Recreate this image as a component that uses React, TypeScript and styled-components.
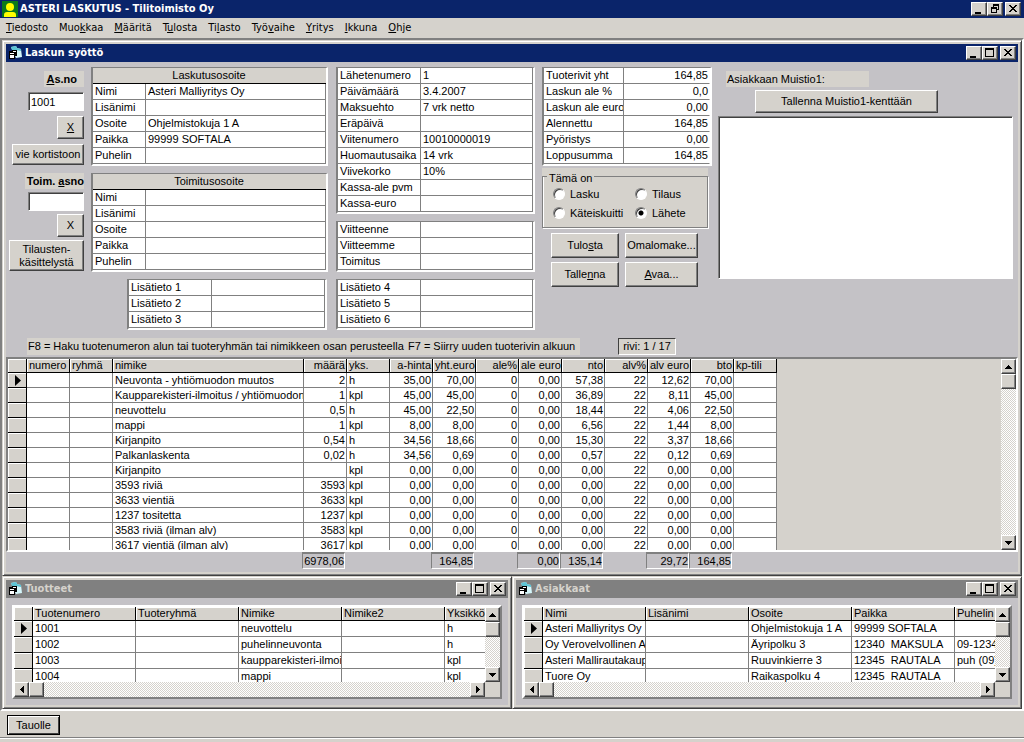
import React from "react";
import styled, { createGlobalStyle, css } from "styled-components";

const face = "#d5d2cc";
const canvas = "#c4c2c6";
const navy = "#0a246a";
const grey = "#808080";
const dark = "#404040";

const uiFont = `"Liberation Sans", Arial, sans-serif`;
const chromeFont = `"DejaVu Sans Condensed", "DejaVu Sans", Tahoma, sans-serif`;

const Global = createGlobalStyle`
  *, *::before, *::after { box-sizing: border-box; }
  body { margin: 0; background: ${face}; }
  body, button, input, textarea { font: 11px/13px ${uiFont}; color: #000; }
  button { margin: 0; padding: 0; }
`;

const raised = css`
  border: 1px solid;
  border-color: #fff ${dark} ${dark} #fff;
  box-shadow: inset -1px -1px 0 ${grey};
  background: ${face};
`;
const sunken = css`
  border: 1px solid;
  border-color: ${grey} #fff #fff ${grey};
  box-shadow: inset 1px 1px 0 ${dark};
  background: #fff;
`;

/* ---------- shell ---------- */

const Page = styled.div`
  min-height: 100vh;
  display: flex;
  flex-direction: column;
`;

const TitleBar = styled.header<{ $bg: string; $fg?: string; $pad: string }>`
  height: 18px;
  display: flex;
  align-items: center;
  gap: 2px;
  padding: ${(p) => p.$pad};
  background: ${(p) => p.$bg};
  color: ${(p) => p.$fg || "#fff"};
  font: bold 11px/18px ${chromeFont};
`;

const Caption = styled.h1`
  flex: 1;
  margin: 0;
  font: inherit;
  white-space: nowrap;
  overflow: hidden;
`;

const CaptionButtons = styled.div`
  display: flex;
  button:last-child { margin-left: 2px; }
`;

const CaptionButton = styled.button`
  ${raised}
  width: 16px;
  height: 14px;
  display: grid;
  place-items: center;
  svg { display: block; }
`;

const MenuBar = styled.nav`
  height: 20px;
  display: flex;
  align-items: center;
`;

const MenuItem = styled.button`
  border: 0;
  background: none;
  padding: 0 5px 0 6px;
  font: 11px/18px ${chromeFont};
`;

const Client = styled.main`
  flex: 1;
  display: flex;
  flex-direction: column;
  border: solid;
  border-width: 2px;
  border-color: ${grey} #fff #fff ${grey};
  background: ${grey};
`;

const Pair = styled.div`
  flex: 1;
  display: grid;
  grid-template-columns: 1fr 1fr;
`;

const Frame = styled.section`
  min-width: 0;
  padding: 3px;
  border: 1px solid;
  border-color: ${face} ${dark} ${dark} ${face};
  box-shadow: inset 1px 1px 0 #fff, inset -1px -1px 0 ${grey};
  background: ${face};
`;

const FormBody = styled.div`
  background: ${canvas};
  padding-bottom: 3px;
`;

const StatusBar = styled.footer`
  height: 27px;
  margin-bottom: 4px;
  padding: 4px 7px;
  border-bottom: 1px solid ${grey};
  box-shadow: 0 1px 0 #fff;
`;

/* ---------- controls ---------- */

const PushButton = styled.button<{ $w?: number; $h: number; $strong?: boolean }>`
  ${raised}
  display: block;
  width: ${(p) => (p.$w ? p.$w + "px" : "auto")};
  height: ${(p) => p.$h}px;
  ${(p) => p.$strong && css`border-color: #000;
    box-shadow: inset 1px 1px 0 #fff, inset -1px -1px 0 ${dark};`}
`;

const TextBox = styled.input`
  ${sunken}
  width: 56px;
  height: 19px;
  padding: 0 2px;
  border-radius: 0;
  outline: none;
`;

const Tag = styled.label`
  background: ${face};
  line-height: 16px;
  padding: 0 1px;
`;

const BoldTag = styled(Tag)<{ $inset?: boolean }>`
  font-weight: bold;
  white-space: nowrap;
  padding: 0 ${(p) => (p.$inset ? "7px" : "0")} 0 2px;
`;

/* ---------- form ---------- */

const Form = styled.div`
  display: grid;
  grid-template-columns: 78px 238px 199px 169px 1fr;
  column-gap: 7px;
  padding: 5px 5px 0 0;
`;

const Column = styled.div`
  display: flex;
  flex-direction: column;
  gap: 7px;
`;

const CustomerColumn = styled.div`
  display: grid;
  grid-template-rows: 106px auto;
  align-items: start;
`;

const Stack = styled.div<{ $gap: number; $top?: number }>`
  display: flex;
  flex-direction: column;
  align-items: flex-end;
  gap: ${(p) => p.$gap}px;
  padding-top: ${(p) => p.$top || 0}px;
`;

const FieldTable = styled.table<{ $w: number; $label: number; $indent?: boolean }>`
  width: ${(p) => p.$w}px;
  margin-left: ${(p) => (p.$indent ? "36px" : "0")};
  table-layout: fixed;
  border-collapse: separate;
  border-spacing: 0;
  border: solid;
  border-width: 1px 2px 2px 2px;
  border-color: ${grey} #fff #fff ${grey};
  background: #fff;
  col:first-child { width: ${(p) => p.$label}px; }
  th, td {
    height: 16px;
    padding: 0 3px 0 2px;
    line-height: 15px;
    font-weight: normal;
    text-align: left;
    white-space: nowrap;
    overflow: hidden;
    border-bottom: 1px solid ${grey};
  }
  tbody th { border-right: 1px solid ${grey}; padding-right: 0; }
  thead th {
    text-align: center;
    background: ${face};
    border-bottom-color: #000;
  }
`;

const Value = styled.td<{ $right?: boolean }>`
  && {
    text-align: ${(p) => (p.$right ? "right" : "left")};
    padding-right: ${(p) => (p.$right ? "1px" : "3px")};
  }
  border-right: 1px solid ${(p) => (p.$right ? "transparent" : grey)};
`;

const GroupPanel = styled.div`
  background: ${face};
  margin-top: -5px;
  width: 166px;
`;

const Group = styled.fieldset`
  margin: 0;
  height: 60px;
  padding: 2px 0 0 10px;
  border: 1px solid ${grey};
  box-shadow: 1px 1px 0 #fff, inset 1px 0 0 #fff;
  display: grid;
  grid-template-columns: 82px 1fr;
  row-gap: 5px;
  align-content: start;
  legend { padding: 4px 2px 0; margin-left: -6px; line-height: 13px; }
  label { display: flex; align-items: center; gap: 5px; height: 14px; }
`;

const Radio = styled.input`
  appearance: none;
  width: 12px;
  height: 12px;
  margin: 0;
  border-radius: 50%;
  border: 1px solid;
  border-color: ${grey} #fff #fff ${grey};
  box-shadow: inset 1px 1px 0 ${dark};
  background: #fff;
  &:checked { background: radial-gradient(circle at 5px 5px, #000 2px, #fff 3px); }
`;

const ActionGrid = styled.div`
  display: grid;
  grid-template-columns: 68px 73px;
  gap: 4px 6px;
  padding-left: 9px;
  margin-top: -2px;
`;

const NoteColumn = styled.div`
  display: flex;
  flex-direction: column;
  align-items: flex-start;
  padding-top: 4px;
  gap: 3px;
`;

const NoteLabel = styled(Tag)`
  width: 143px;
  margin-left: 8px;
`;

const NoteButton = styled(PushButton)`
  margin-left: 37px;
`;

const Notes = styled.textarea`
  ${sunken}
  width: 100%;
  height: 163px;
  resize: none;
  outline: none;
`;

const HintRow = styled.div`
  display: flex;
  padding: 8px 0 2px 21px;
  line-height: 17px;
`;

const Hint = styled.span<{ $w: number }>`
  min-width: ${(p) => p.$w}px;
  padding-left: 1px;
  background: ${face};
  white-space: nowrap;
`;

const RowCounter = styled.output`
  margin-left: 38px;
  width: 58px;
  text-align: center;
  background: ${face};
  border: 1px solid;
  border-color: ${dark} #fff #fff ${dark};
  line-height: 15px;
`;

/* ---------- data grids ---------- */

const GridBox = styled.div<{ $raised?: boolean }>`
  display: grid;
  grid-template-columns: minmax(0, 1fr) 15px;
  background: ${face};
  border: 2px solid;
  border-color: ${(p) => (p.$raised ? `#fff ${grey} ${grey} #fff` : `${grey} #fff #fff ${grey}`)};
`;

const Viewport = styled.div<{ $h: number }>`
  height: ${(p) => p.$h}px;
  overflow: hidden;
`;

const DataTable = styled.table<{ $row: number; $w: number }>`
  width: ${(p) => p.$w}px;
  table-layout: fixed;
  border-collapse: separate;
  border-spacing: 0;
  background: #fff;
  th, td {
    height: ${(p) => p.$row}px;
    padding: 0 1px 0 2px;
    line-height: ${(p) => p.$row - 1}px;
    white-space: nowrap;
    overflow: hidden;
    font-weight: normal;
    text-align: left;
    border-right: 1px solid ${grey};
    border-bottom: 1px solid ${grey};
  }
  thead th, tbody th {
    background: ${face};
    box-shadow: inset 1px 1px 0 #fff;
    border-color: #000;
  }
  thead th { height: 14px; line-height: 13px; }
  tbody th { padding: 0; }
  tbody th svg { display: block; margin-left: 7px; }
`;

const Cell = styled.td<{ $right?: boolean }>`
  && { text-align: ${(p) => (p.$right ? "right" : "left")}; }
`;
const Head = styled.th<{ $right?: boolean }>`
  && { text-align: ${(p) => (p.$right ? "right" : "left")}; }
`;

const Track = styled.div<{ $row?: boolean }>`
  display: flex;
  flex-direction: ${(p) => (p.$row ? "row" : "column")};
  background: repeating-conic-gradient(#fff 0 25%, ${face} 0 50%) 0 0 / 2px 2px;
`;

const ScrollButton = styled.button<{ $end?: boolean }>`
  ${raised}
  width: 15px;
  height: 15px;
  display: grid;
  place-items: center;
  ${(p) => p.$end && "margin: auto 0 0 auto;"}
  svg { display: block; }
`;

const Thumb = styled.div`
  ${raised}
  width: 15px;
  height: 15px;
`;

const Corner = styled.div`
  background: ${face};
`;

const Totals = styled.div`
  display: grid;
  grid-template-columns: 296px repeat(10, 43px);
  height: 17px;
`;

const Total = styled.output<{ $col: number }>`
  grid-column: ${(p) => p.$col};
  border: 1px solid;
  border-width: 2px 1px 1px 1px;
  border-color: ${grey} #fff #fff ${grey};
  background: ${canvas};
  line-height: 14px;
  white-space: nowrap;
  display: flex;
  justify-content: flex-end;
`;

const ListBody = styled.div`
  height: calc(100% - 18px);
  background: ${canvas};
  padding: 7px 6px 6px;
`;

/* ---------- icons ---------- */

const AppIcon = () => (
  <svg width="16" height="16" viewBox="0 0 16 16" aria-hidden="true">
    <rect width="16" height="16" fill="#0a7a1a" />
    <circle cx="8" cy="6" r="4" fill="#ff0" />
    <path d="M2 16V14Q2 11 5 11H11Q14 11 14 14V16Z" fill="#ff0" />
  </svg>
);

const FormIcon = () => (
  <svg width="14" height="14" viewBox="0 0 14 14" aria-hidden="true">
    <path d="M2 1L7 0L8 2L12 3L13 11L7 12L4 6Z" fill="#d4f6fa" />
    <path d="M2 1L7 0L8 2L12 3V5L7 4L3 4Z" fill="#5cc4d4" />
    <path d="M0 5H3V4H8V10H6V13H0Z" fill="#000" />
    <path d="M1 7H5V8H1Z M1 9H5V12H1Z M4 5H7V6H4Z" fill="#fff" />
  </svg>
);

const Glyph = ({ d }: { d: string }) => (
  <svg width="10" height="10" viewBox="0 0 10 10" shapeRendering="crispEdges" aria-hidden="true">
    <path d={d} fill="#000" />
  </svg>
);

const MIN = "M1 8H7V10H1Z";
const MAX = "M0 0H9V9H0ZM1 2V8H8V2Z";
const RESTORE = "M3 0H9V6H7V5H8V2H4V3H3ZM1 3H7V9H1ZM2 5V8H6V5Z";
const CLOSE =
  "M1 1H3V2H4V3H6V2H7V1H9V2H8V3H7V4H6V5H7V6H8V7H9V8H7V7H6V6H4V7H3V8H1V7H2V6H3V5H4V4H3V3H2V2H1Z";

const Arrow = ({ dir }: { dir: "up" | "down" | "left" | "right" }) => {
  const d = {
    up: "M3 0H4V1H5V2H6V3H7V4H0V3H1V2H2V1H3Z",
    down: "M0 0H7V1H6V2H5V3H4V4H3V3H2V2H1V1H0Z",
    left: "M3 0H4V7H3V6H2V5H1V4H0V3H1V2H2V1H3Z",
    right: "M0 0H1V1H2V2H3V3H4V4H3V5H2V6H1V7H0Z",
  }[dir];
  const tall = dir === "left" || dir === "right";
  return (
    <svg width={tall ? 4 : 7} height={tall ? 7 : 4} shapeRendering="crispEdges" aria-hidden="true">
      <path d={d} />
    </svg>
  );
};

const RowMarker = () => (
  <svg width="6" height="11" viewBox="0 0 6 11" aria-hidden="true">
    <path d="M0 0L6 5.5L0 11Z" />
  </svg>
);

/* ---------- parts ---------- */

/** Text whose mnemonic letter follows an ampersand. */
const Mn = ({ t }: { t: string }) => {
  const i = t.indexOf("&");
  if (i < 0) return <>{t}</>;
  return (
    <span>
      {t.slice(0, i)}
      <u>{t[i + 1]}</u>
      {t.slice(i + 2)}
    </span>
  );
};

const WindowButtons = ({ restore }: { restore?: boolean }) => (
  <CaptionButtons>
    <CaptionButton aria-label="Pienennä"><Glyph d={MIN} /></CaptionButton>
    <CaptionButton aria-label={restore ? "Palauta" : "Suurenna"}><Glyph d={restore ? RESTORE : MAX} /></CaptionButton>
    <CaptionButton aria-label="Sulje"><Glyph d={CLOSE} /></CaptionButton>
  </CaptionButtons>
);

type FieldsProps = {
  title?: string;
  rows: [string, string][];
  w: number;
  label: number;
  right?: boolean;
  indent?: boolean;
};

const Fields = ({ title, rows, w, label, right, indent }: FieldsProps) => (
  <FieldTable $w={w} $label={label} $indent={indent}>
    <colgroup><col /><col /></colgroup>
    {title && <thead><tr><th colSpan={2}>{title}</th></tr></thead>}
    <tbody>
      {rows.map(([k, v]) => (
        <tr key={k}>
          <th scope="row">{k}</th>
          <Value $right={right}>{v}</Value>
        </tr>
      ))}
    </tbody>
  </FieldTable>
);

const VScroll = () => (
  <Track>
    <ScrollButton aria-label="Ylös"><Arrow dir="up" /></ScrollButton>
    <Thumb />
    <ScrollButton $end aria-label="Alas"><Arrow dir="down" /></ScrollButton>
  </Track>
);

const HScroll = () => (
  <Track $row>
    <ScrollButton aria-label="Vasen"><Arrow dir="left" /></ScrollButton>
    <Thumb />
    <ScrollButton $end aria-label="Oikea"><Arrow dir="right" /></ScrollButton>
  </Track>
);

type Col = { name: string; w: number; right?: boolean };

const SizedCol = styled.col<{ $w: number }>`
  width: ${(p) => p.$w}px;
`;

const Data = ({ cols, rows, row }: { cols: Col[]; rows: string[][]; row: number }) => (
  <DataTable $row={row} $w={cols.reduce((s, c) => s + c.w, 19)}>
    <colgroup>
      <SizedCol $w={19} />
      {cols.map((c) => <SizedCol key={c.name} $w={c.w} />)}
    </colgroup>
    <thead>
      <tr>
        <Head />
        {cols.map((c) => <Head key={c.name} $right={c.right}>{c.name}</Head>)}
      </tr>
    </thead>
    <tbody>
      {rows.map((r, i) => (
        <tr key={i}>
          <th scope="row">{i === 0 && <RowMarker />}</th>
          {cols.map((c, j) => <Cell key={c.name} $right={c.right}>{r[j]}</Cell>)}
        </tr>
      ))}
    </tbody>
  </DataTable>
);

const ListWindow = ({ title, names, rows }: { title: string; names: string[]; rows: string[][] }) => (
  <Frame>
    <TitleBar $bg={grey} $fg={face} $pad="0 2px 0 3px">
      <FormIcon />
      <Caption as="h2">{title}</Caption>
      <WindowButtons />
    </TitleBar>
    <ListBody>
      <GridBox $raised>
        <Viewport $h={75}>
          <Data cols={names.map((name) => ({ name, w: 103 }))} rows={rows} row={16} />
        </Viewport>
        <VScroll />
        <HScroll />
        <Corner />
      </GridBox>
    </ListBody>
  </Frame>
);

/* ---------- data ---------- */

const menu = ["&Tiedosto", "Muo&kkaa", "&Määritä", "T&ulosta", "Ti&lasto", "Työ&vaihe", "&Yritys", "&Ikkuna", "&Ohje"];

const invoiceCols: Col[] = [
  { name: "numero", w: 43 },
  { name: "ryhmä", w: 43 },
  { name: "nimike", w: 191 },
  { name: "määrä", w: 43, right: true },
  { name: "yks.", w: 43 },
  { name: "a-hinta", w: 43, right: true },
  { name: "yht.euro", w: 43, right: true },
  { name: "ale%", w: 43, right: true },
  { name: "ale euro", w: 43, right: true },
  { name: "nto", w: 43, right: true },
  { name: "alv%", w: 43, right: true },
  { name: "alv euro", w: 43, right: true },
  { name: "bto", w: 43, right: true },
  { name: "kp-tili", w: 43 },
];

const zero = ["0,00", "0,00", "0", "0,00", "0,00", "22", "0,00", "0,00"];
const invoiceRows = [
  ["Neuvonta - yhtiömuodon muutos", "2", "h", "35,00", "70,00", "0", "0,00", "57,38", "22", "12,62", "70,00"],
  ["Kaupparekisteri-ilmoitus / yhtiömuodon m", "1", "kpl", "45,00", "45,00", "0", "0,00", "36,89", "22", "8,11", "45,00"],
  ["neuvottelu", "0,5", "h", "45,00", "22,50", "0", "0,00", "18,44", "22", "4,06", "22,50"],
  ["mappi", "1", "kpl", "8,00", "8,00", "0", "0,00", "6,56", "22", "1,44", "8,00"],
  ["Kirjanpito", "0,54", "h", "34,56", "18,66", "0", "0,00", "15,30", "22", "3,37", "18,66"],
  ["Palkanlaskenta", "0,02", "h", "34,56", "0,69", "0", "0,00", "0,57", "22", "0,12", "0,69"],
  ["Kirjanpito", "", "kpl", ...zero],
  ["3593 riviä", "3593", "kpl", ...zero],
  ["3633 vientiä", "3633", "kpl", ...zero],
  ["1237 tositetta", "1237", "kpl", ...zero],
  ["3583 riviä (ilman alv)", "3583", "kpl", ...zero],
  ["3617 vientiä (ilman alv)", "3617", "kpl", ...zero],
].map((r) => ["", "", ...r]);

const totals: [number, string][] = [
  [2, "6978,06"],
  [5, "164,85"],
  [7, "0,00"],
  [8, "135,14"],
  [10, "29,72"],
  [11, "164,85"],
];

const products = [
  ["1001", "", "neuvottelu", "", "h"],
  ["1002", "", "puhelinneuvonta", "", "h"],
  ["1003", "", "kaupparekisteri-ilmoit", "", "kpl"],
  ["1004", "", "mappi", "", "kpl"],
];

const customers = [
  ["Asteri Malliyritys Oy", "", "Ohjelmistokuja 1 A", "99999 SOFTALA", ""],
  ["Oy Verovelvollinen A", "", "Äyripolku 3", "12340\u00a0 MAKSULA", "09-1234"],
  ["Asteri Mallirautakaup", "", "Ruuvinkierre 3", "12345\u00a0 RAUTALA", "puh (09)"],
  ["Tuore Oy", "", "Raikaspolku 4", "12345\u00a0 RAUTALA", ""],
];

export default function App() {
  return (
    <Page>
      <Global />
      <TitleBar $bg={navy} $pad="0 3px 0 2px">
        <AppIcon />
        <Caption>ASTERI LASKUTUS - Tilitoimisto Oy</Caption>
        <WindowButtons restore />
      </TitleBar>
      <MenuBar>
        {menu.map((m) => <MenuItem key={m}><Mn t={m} /></MenuItem>)}
      </MenuBar>

      <Client>
        <Frame>
          <TitleBar $bg={navy} $pad="0 2px 0 3px">
            <FormIcon />
            <Caption as="h2">Laskun syöttö</Caption>
            <WindowButtons />
          </TitleBar>
          <FormBody>
            <Form>
              <CustomerColumn>
                <Stack $gap={5} $top={4}>
                  <BoldTag htmlFor="asno" $inset><Mn t="&As.no" /></BoldTag>
                  <TextBox id="asno" defaultValue="1001" />
                  <PushButton $w={27} $h={23}><Mn t="&X" /></PushButton>
                  <PushButton $w={72} $h={21}>vie kortistoon</PushButton>
                </Stack>
                <Stack $gap={3}>
                  <BoldTag htmlFor="toimasno"><Mn t="Toim. &asno" /></BoldTag>
                  <TextBox id="toimasno" />
                  <PushButton $w={27} $h={23}>X</PushButton>
                  <PushButton $w={75} $h={31}>Tilausten-<br />käsittelystä</PushButton>
                </Stack>
              </CustomerColumn>

              <Column>
                <Fields
                  title="Laskutusosoite"
                  w={237}
                  label={53}
                  rows={[
                    ["Nimi", "Asteri Malliyritys Oy"],
                    ["Lisänimi", ""],
                    ["Osoite", "Ohjelmistokuja 1 A"],
                    ["Paikka", "99999 SOFTALA"],
                    ["Puhelin", ""],
                  ]}
                />
                <Fields
                  title="Toimitusosoite"
                  w={237}
                  label={53}
                  rows={[["Nimi", ""], ["Lisänimi", ""], ["Osoite", ""], ["Paikka", ""], ["Puhelin", ""]]}
                />
                <Fields
                  indent
                  w={200}
                  label={83}
                  rows={[["Lisätieto 1", ""], ["Lisätieto 2", ""], ["Lisätieto 3", ""]]}
                />
              </Column>

              <Column>
                <Fields
                  w={199}
                  label={83}
                  rows={[
                    ["Lähetenumero", "1"],
                    ["Päivämäärä", "3.4.2007"],
                    ["Maksuehto", "7 vrk netto"],
                    ["Eräpäivä", ""],
                    ["Viitenumero", "10010000019"],
                    ["Huomautusaika", "14 vrk"],
                    ["Viivekorko", "10%"],
                    ["Kassa-ale pvm", ""],
                    ["Kassa-euro", ""],
                  ]}
                />
                <Fields w={199} label={83} rows={[["Viitteenne", ""], ["Viitteemme", ""], ["Toimitus", ""]]} />
                <Fields w={199} label={83} rows={[["Lisätieto 4", ""], ["Lisätieto 5", ""], ["Lisätieto 6", ""]]} />
              </Column>

              <Column>
                <Fields
                  right
                  w={170}
                  label={80}
                  rows={[
                    ["Tuoterivit yht", "164,85"],
                    ["Laskun ale %", "0,0"],
                    ["Laskun ale euro", "0,00"],
                    ["Alennettu", "164,85"],
                    ["Pyöristys", "0,00"],
                    ["Loppusumma", "164,85"],
                  ]}
                />
                <GroupPanel>
                  <Group>
                    <legend>Tämä on</legend>
                    <label><Radio type="radio" name="laji" />Lasku</label>
                    <label><Radio type="radio" name="laji" />Tilaus</label>
                    <label><Radio type="radio" name="laji" />Käteiskuitti</label>
                    <label><Radio type="radio" name="laji" defaultChecked />Lähete</label>
                  </Group>
                </GroupPanel>
                <ActionGrid>
                  <PushButton $h={25}><Mn t="Tulo&sta" /></PushButton>
                  <PushButton $h={25}>Omalomake...</PushButton>
                  <PushButton $h={25}><Mn t="Talle&nna" /></PushButton>
                  <PushButton $h={25}><Mn t="&Avaa..." /></PushButton>
                </ActionGrid>
              </Column>

              <NoteColumn>
                <NoteLabel htmlFor="muistio">Asiakkaan Muistio1:</NoteLabel>
                <NoteButton $w={183} $h={23}>Tallenna Muistio1-kenttään</NoteButton>
                <Notes id="muistio" />
              </NoteColumn>
            </Form>

            <HintRow>
              <Hint $w={380}>F8 = Haku tuotenumeron alun tai tuoteryhmän tai nimikkeen osan perusteella</Hint>
              <Hint $w={173}>F7 = Siirry uuden tuoterivin alkuun</Hint>
              <RowCounter>rivi: 1 / 17</RowCounter>
            </HintRow>

            <GridBox>
              <Viewport $h={191}>
                <Data cols={invoiceCols} rows={invoiceRows} row={15} />
              </Viewport>
              <VScroll />
            </GridBox>
            <Totals>
              {totals.map(([c, v]) => <Total key={c} $col={c}>{v}</Total>)}
            </Totals>
          </FormBody>
        </Frame>

        <Pair>
          <ListWindow
            title="Tuotteet"
            names={["Tuotenumero", "Tuoteryhmä", "Nimike", "Nimike2", "Yksikkö"]}
            rows={products}
          />
          <ListWindow
            title="Asiakkaat"
            names={["Nimi", "Lisänimi", "Osoite", "Paikka", "Puhelin"]}
            rows={customers}
          />
        </Pair>
      </Client>

      <StatusBar>
        <PushButton $w={53} $h={20} $strong>Tauolle</PushButton>
      </StatusBar>
    </Page>
  );
}
